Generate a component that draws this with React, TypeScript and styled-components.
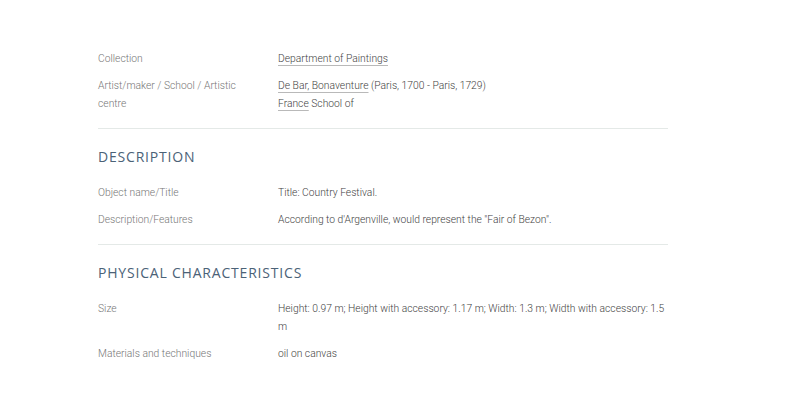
import React from 'react';
import styled, { createGlobalStyle } from 'styled-components';

const GlobalStyle = createGlobalStyle`
  html, body {
    margin: 0;
    padding: 0;
    background: #ffffff;
  }
  body {
    font-family: Roboto, "Liberation Sans", sans-serif;
  }
`;

const Page = styled.main`
  width: 570px;
  padding: 50px 0 0 98px;
`;

const Section = styled.section<{ $last?: boolean }>`
  display: flex;
  flex-direction: column;
  padding-bottom: ${(p) => (p.$last ? '0' : '15px')};
  border-bottom: ${(p) => (p.$last ? 'none' : '1px solid #e4e9e7')};
`;

const Heading = styled.h2`
  margin: 18px 0 17px;
  font-family: "Open Sans", "Liberation Sans", sans-serif;
  font-size: 14px;
  line-height: 20px;
  font-weight: 400;
  letter-spacing: 0.8px;
  text-transform: uppercase;
  color: #4b6277;
`;

const Rows = styled.dl`
  display: flex;
  flex-direction: column;
  gap: 9px;
  margin: 0;
`;

const Row = styled.div`
  display: grid;
  grid-template-columns: 180px 1fr;
  font-size: 10.3px;
  font-weight: 300;
  line-height: 18px;
`;

const Label = styled.dt`
  color: #767676;
  padding-right: 20px;
`;

const Value = styled.dd`
  margin: 0;
  color: #3f3f3f;
`;

const Line = styled.div``;

const Ref = styled.a`
  color: inherit;
  text-decoration: underline;
  text-decoration-color: #b9b9b9;
  text-underline-offset: 3px;
`;

type Item = { label: string; value: React.ReactNode };

const identity: Item[] = [
  { label: 'Collection', value: <Ref>Department of Paintings</Ref> },
  {
    label: 'Artist/maker / School / Artistic centre',
    value: (
      <>
        <Line>
          <Ref>De Bar, Bonaventure</Ref> (Paris, 1700 - Paris, 1729)
        </Line>
        <Line>
          <Ref>France</Ref> School of
        </Line>
      </>
    ),
  },
];

const description: Item[] = [
  { label: 'Object name/Title', value: 'Title: Country Festival.' },
  {
    label: 'Description/Features',
    value: 'According to d\'Argenville, would represent the "Fair of Bezon".',
  },
];

const physical: Item[] = [
  {
    label: 'Size',
    value:
      'Height: 0.97 m; Height with accessory: 1.17 m; Width: 1.3 m; Width with accessory: 1.5 m',
  },
  { label: 'Materials and techniques', value: 'oil on canvas' },
];

const ItemList: React.FC<{ items: Item[] }> = ({ items }) => (
  <Rows>
    {items.map((it) => (
      <Row key={it.label}>
        <Label>{it.label}</Label>
        <Value>{it.value}</Value>
      </Row>
    ))}
  </Rows>
);

export default function App() {
  return (
    <>
      <GlobalStyle />
      <Page>
        <Section>
          <ItemList items={identity} />
        </Section>
        <Section>
          <Heading>Description</Heading>
          <ItemList items={description} />
        </Section>
        <Section $last>
          <Heading>Physical characteristics</Heading>
          <ItemList items={physical} />
        </Section>
      </Page>
    </>
  );
}
